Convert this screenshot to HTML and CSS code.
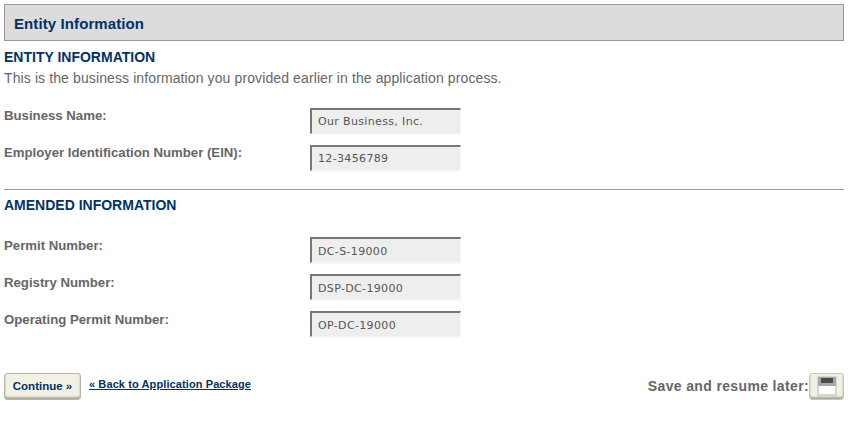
FILE: index.html
```html
<!DOCTYPE html>
<html>

<head>
    <meta http-equiv="Content-Type" content="text/html; charset=utf-8" />
    <title>Entity Information</title>
    <link rel="stylesheet" href="styles.css">
</head>

<body>

    <div class="container">
        <h1 class="Page-Title">Entity Information</h1>

        <h2 class="Section-Title">ENTITY INFORMATION</h2>
        <p class="Section-Intro">This is the business information you provided earlier in the application process.</p>

        <div class="Form-Rows">
            <div class="Form-Row">
                <label class="Form-Label">Business Name:</label>
                <input class="Form-Input" type="text" value="Our Business, Inc." readonly>
            </div>
            <div class="Form-Row">
                <label class="Form-Label">Employer Identification Number (EIN):</label>
                <input class="Form-Input" type="text" value="12-3456789" readonly>
            </div>
        </div>

        <hr class="Divider">

        <h2 class="Section-Title Amended-Title">AMENDED INFORMATION</h2>

        <div class="Form-Rows Amended-Rows">
            <div class="Form-Row">
                <label class="Form-Label">Permit Number:</label>
                <input class="Form-Input" type="text" value="DC-S-19000" readonly>
            </div>
            <div class="Form-Row">
                <label class="Form-Label">Registry Number:</label>
                <input class="Form-Input" type="text" value="DSP-DC-19000" readonly>
            </div>
            <div class="Form-Row">
                <label class="Form-Label">Operating Permit Number:</label>
                <input class="Form-Input" type="text" value="OP-DC-19000" readonly>
            </div>
        </div>

        <div class="Button-Row">
            <button class="Continue-Button" type="button">Continue »</button>
            <a class="Back-Link" href="#">« Back to Application Package</a>
            <span class="Save-Label">Save and resume later:</span>
            <button class="Save-Button" type="button" aria-label="Save and resume later">
                <svg width="20" height="21" viewBox="0 0 20 21">
                    <rect x="0" y="0" width="20" height="21" fill="#d6d6d0" />
                    <rect x="1" y="1" width="18" height="9" fill="#a8a8a8" />
                    <rect x="4" y="2" width="12" height="5" fill="#4a4a4a" />
                    <rect x="2" y="10" width="16" height="8" fill="#ffffff" />
                </svg>
            </button>
        </div>
    </div>

</body>

</html>
```

FILE: styles.css
```css
body {
    margin: 0;
    background-color: #ffffff;
    color: #666666;
    font-family: "Liberation Sans", Arial, sans-serif;
    font-size: 14px;
}

.container {
    padding: 4px 5px 0 4px;
}

.Page-Title {
    margin: 0;
    height: 35px;
    padding-left: 9px;
    border: 1px solid #999999;
    background-color: #dcdcdc;
    color: #003366;
    font-size: 15px;
    letter-spacing: 0.1px;
    line-height: 38px;
}

.Section-Title {
    margin: 8px 0 0 0;
    color: #003366;
    font-size: 14px;
    line-height: 16px;
}

.Amended-Title {
    margin-top: 7px;
}

.Section-Intro {
    margin: 5px 0 0 0;
    line-height: 16px;
    font-size: 14px;
    letter-spacing: 0.11px;
}

.Form-Rows {
    display: flex;
    flex-direction: column;
    gap: 11px;
    margin-top: 22px;
}

.Amended-Rows {
    margin-top: 24px;
}

.Form-Row {
    display: grid;
    grid-template-columns: 306px 151px;
}

.Form-Label {
    font-size: 13.2px;
    font-weight: bold;
    line-height: 16px;
}

.Form-Input {
    box-sizing: border-box;
    width: 151px;
    height: 26px;
    padding: 0 0 0 6px;
    border: none;
    border-top: 2px solid #777777;
    border-left: 2px solid #777777;
    border-right: 1px solid #f6f6f6;
    border-bottom: 1px solid #f6f6f6;
    box-shadow: 0 1px 0 #f8f8f8;
    background-color: #eeeeee;
    color: #555555;
    font-family: "DejaVu Sans", Verdana, sans-serif;
    font-size: 11px;
    letter-spacing: 0.35px;
}

.Amended-Rows .Form-Label {
    margin-top: 1px;
}

.Amended-Rows .Form-Input {
    padding-top: 1px;
}

.Divider {
    height: 1px;
    margin: 18px 0 0 0;
    border: none;
    background-color: #999999;
}

.Button-Row {
    display: flex;
    align-items: center;
    margin-top: 36px;
}

.Continue-Button {
    width: 77px;
    height: 27px;
    padding: 0 0 2px 0;
    border: 1px solid #b5b5aa;
    border-radius: 3px;
    background-color: #f3f1e4;
    box-shadow: inset 0 -2px 2px #a9a79b;
    color: #003366;
    font-family: "Liberation Sans", Arial, sans-serif;
    font-size: 11.5px;
    font-weight: bold;
}

.Back-Link {
    margin: -6px 0 0 8px;
    color: #003366;
    font-size: 11px;
    font-weight: bold;
    letter-spacing: 0.1px;
}

.Save-Label {
    margin: -2px 0 0 auto;
    font-size: 14px;
    font-weight: bold;
    letter-spacing: 0.36px;
}

.Save-Button {
    display: flex;
    align-items: center;
    justify-content: center;
    width: 35px;
    height: 27px;
    padding: 0;
    border: 1px solid #c4c4b9;
    border-radius: 3px;
    background-color: #f3f1e4;
    box-shadow: inset 0 -2px 2px #a9a79b;
}
```
